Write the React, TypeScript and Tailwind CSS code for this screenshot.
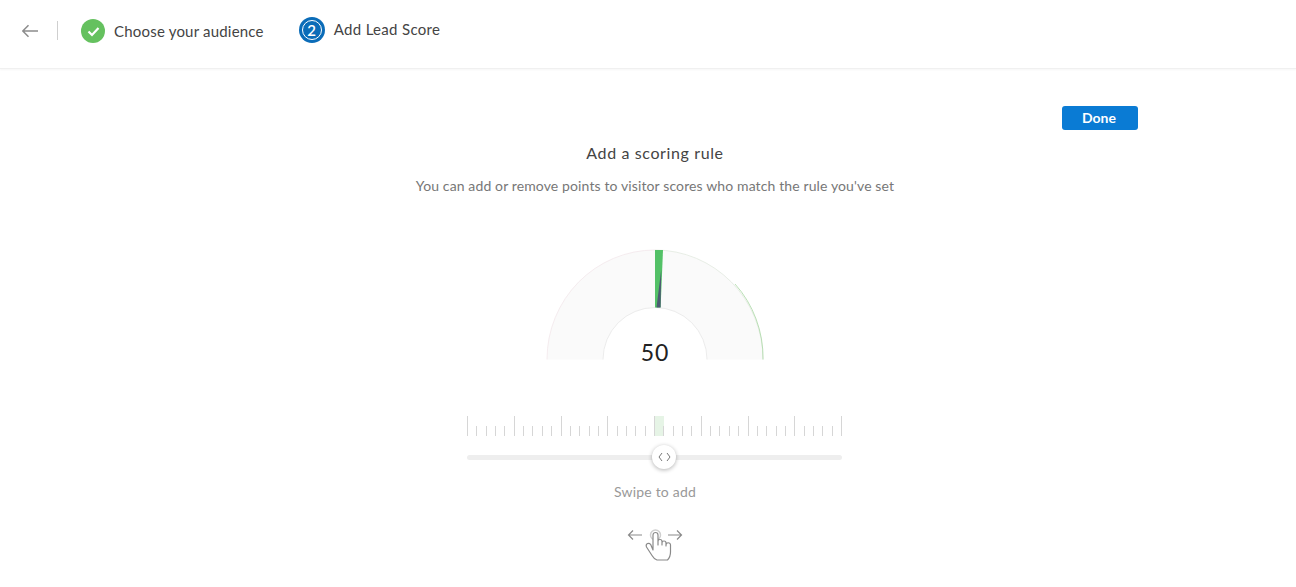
const ticks = Array.from({ length: 41 }, (_, i) => i);

function Gauge() {
  return (
    <div className="relative w-[220px] h-[112px]">
      <svg width="220" height="112" viewBox="0 0 220 112" className="block">
        <path d="M2 111.5 A108 109.5 0 0 1 218 111.5 L162 111.5 A52 52 0 0 0 58 111.5 Z" fill="#fafafa" />
        <path d="M2 111.5 A108 109.5 0 0 1 110 2" fill="none" stroke="#f5ecef" strokeWidth="1" />
        <path d="M110 2 A108 109.5 0 0 1 218 111.5" fill="none" stroke="#e8eee6" strokeWidth="1" />
        <path d="M190 36 A108 109.5 0 0 1 218 111.5" fill="none" stroke="#a9d8a4" strokeWidth="0.8" />
        <path d="M58 111.5 A52 52 0 0 1 162 111.5" fill="none" stroke="#ececec" strokeWidth="1" />
        <path d="M110 2 L118 2 L115.6 59.5 L110 59.5 Z" fill="#53c167" />
        <path d="M116.2 22 L115.6 59.5 L111.5 59.5 Z" fill="#4c5b72" />
      </svg>
      <div className="absolute left-0 right-0 top-[90px] text-center text-[23px] leading-[28px] text-[#222] tracking-[1px]">50</div>
    </div>
  );
}

function Ruler() {
  return (
    <svg width="376" height="21" viewBox="0 0 376 21" className="block">
      <rect x="187" y="0" width="10" height="20" fill="#e6f4e6" />
      {ticks.map((i) => {
        const x = Math.round(i * 9.35) + 0.5;
        return <line key={i} x1={x} x2={x} y1={i % 5 === 0 ? 0 : 10} y2={20} stroke="#d6d6d6" strokeWidth="1" />;
      })}
    </svg>
  );
}

function Hand() {
  return (
    <svg width="60" height="40" viewBox="0 0 60 40" fill="none" className="block">
      <path d="M3.5 10 H17 M8 5.5 L3.5 10 L8 14.5" stroke="#8a8a8a" strokeWidth="1.2" />
      <path d="M43 10 H56.5 M52 5.5 L56.5 10 L52 14.5" stroke="#8a8a8a" strokeWidth="1.2" />
      <circle cx="30.5" cy="10" r="5" stroke="#cfcfcf" strokeWidth="1.5" />
      <path
        d="M28 25 V10 a2.5 2.5 0 0 1 5 0 V20 V16.5 a2 2 0 0 1 4 0 V20 V18 a2 2 0 0 1 4 0 V21 V20 a2 2 0 0 1 4.5 0 V27 q0 5 -3 8 H32 q-3 -1 -5 -4.5 L21.5 22 q-1 -2.5 1 -3.5 q2 -.5 3.2 1 Z"
        fill="#fff"
        stroke="#8a8a8a"
        strokeWidth="1.2"
        strokeLinejoin="round"
      />
    </svg>
  );
}

export default function App() {
  return (
    <div className="min-h-[587px] bg-white font-['Lato','Open_Sans',sans-serif] overflow-hidden">
      <header className="h-[69px] flex items-center pl-[22px] pb-[8px] border-b border-[#f0f0f0] shadow-[0_1px_2px_rgba(0,0,0,0.04)]">
        <svg width="16" height="14" viewBox="0 0 16 14" fill="none" className="mt-[1px]">
          <path d="M0.8 7 H16 M6.5 1.2 L0.8 7 L6.5 12.8" stroke="#8c8c8c" strokeWidth="1.5" />
        </svg>
        <div className="w-px h-[19px] bg-[#cfcfcf] ml-[19px] mr-[23px] mt-[1px]" />
        <div className="flex items-center mt-[2px]">
          <span className="w-6 h-6 rounded-full bg-[#65c15f] flex items-center justify-center">
            <svg width="13" height="11" viewBox="0 0 13 11" fill="none">
              <path d="M1.5 5.5 L5 9 L11.5 2" stroke="#fff" strokeWidth="2.2" />
            </svg>
          </span>
          <span className="ml-[9px] text-[15px] text-[#444] tracking-[0.2px]">Choose your audience</span>
        </div>
        <div className="flex items-center ml-[35px] -mt-[1px]">
          <span className="w-[26px] h-[26px] rounded-full bg-[#0b6cb8] flex items-center justify-center">
            <span className="w-[20px] h-[20px] rounded-full border border-white text-white text-[15px] font-semibold leading-[18px] text-center">2</span>
          </span>
          <span className="ml-[9px] text-[15px] text-[#444] tracking-[0.32px]">Add Lead Score</span>
        </div>
      </header>

      <main className="flex flex-col items-center pl-[14px]">
        <div className="w-[966px] flex flex-col items-center">
          <div className="w-full flex justify-end pt-[37px]">
            <button className="w-[76px] h-6 rounded-[3px] bg-[#0a7bd4] text-white text-sm font-bold pr-[2px]">Done</button>
          </div>
          <h2 className="mt-[11px] text-base leading-[24px] text-[#444] font-normal tracking-[0.62px]">Add a scoring rule</h2>
          <p className="mt-[11px] text-sm leading-[20px] text-[#777] tracking-[0.12px]">You can add or remove points to visitor scores who match the rule you've set</p>
          <div className="mt-[52px]">
            <Gauge />
          </div>
          <div className="mt-[56px] flex flex-col items-center w-[376px]">
            <Ruler />
            <div className="relative w-[375px] self-start mt-[18px] h-[5px] rounded-full bg-[#eeeeee]">
              <div className="absolute left-[185px] -top-[10px] w-6 h-6 rounded-full bg-white shadow-[0_1px_4px_rgba(0,0,0,0.3)] flex items-center justify-center">
                <svg width="13" height="10" viewBox="0 0 13 10" fill="none">
                  <path d="M4 1 L1 5 L4 9 M9 1 L12 5 L9 9" stroke="#777" strokeWidth="1" />
                </svg>
              </div>
            </div>
            <div className="mt-[22px] text-sm leading-[20px] text-[#999] tracking-[0.18px]">Swipe to add</div>
            <div className="mt-[23px]">
              <Hand />
            </div>
          </div>
        </div>
      </main>
    </div>
  );
}
